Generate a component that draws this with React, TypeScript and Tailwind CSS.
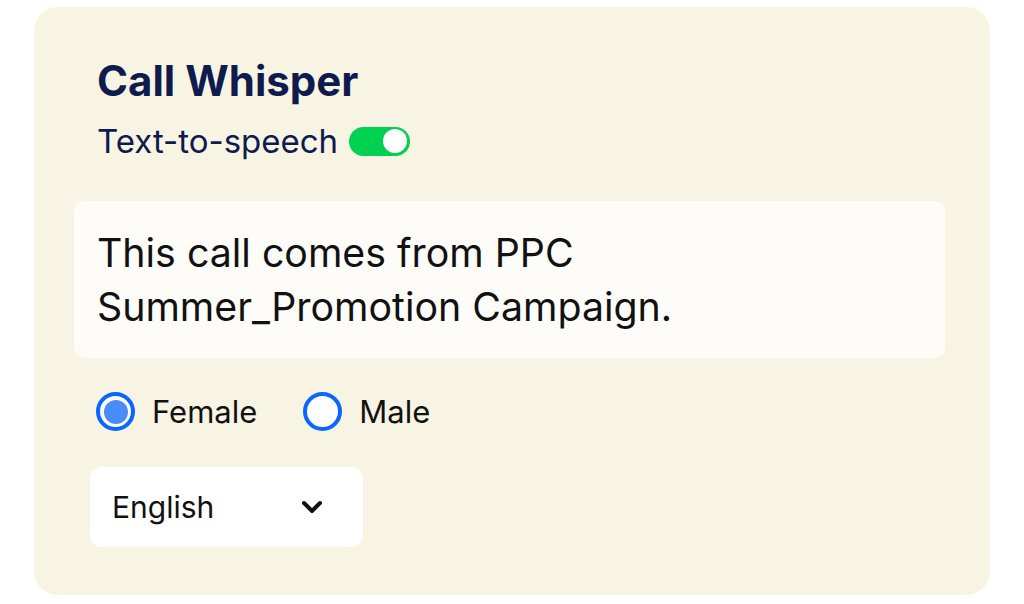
import { useState } from "react";

const Toggle = ({ on }: { on: boolean }) => (
  <span
    className={`inline-flex items-center w-[61px] h-[29px] rounded-full p-[3px] ${
      on ? "bg-[#00d150] justify-end" : "bg-gray-300 justify-start"
    }`}
  >
    <span className="block w-[24px] h-[24px] rounded-full bg-white" />
  </span>
);

const Radio = ({
  label,
  checked,
  onClick,
}: {
  label: string;
  checked: boolean;
  onClick: () => void;
}) => (
  <button type="button" onClick={onClick} className="flex items-center gap-[17px]">
    <span className="flex items-center justify-center w-[39px] h-[39px] rounded-full border-[4px] border-[#0a66ff] bg-white">
      {checked && <span className="block w-[24px] h-[24px] rounded-full bg-[#4a8cf7]" />}
    </span>
    <span className="text-[31px] leading-[39px] text-[#111]">{label}</span>
  </button>
);

export default function App() {
  const [voice, setVoice] = useState("female");

  return (
    <div className="w-[1024px] h-[604px] bg-white pt-[7px] pl-[34px] font-['Inter',sans-serif]">
      <div className="w-[956px] h-[588px] bg-[#f8f4e3] rounded-[24px] pt-[49px] px-[40px]">
        {/* TITLE */}
        <h1 className="pl-[23px] text-[42px] leading-[50px] font-bold text-[#0f1b4f]">
          Call Whisper
        </h1>

        <div className="pl-[23px] mt-[17px] h-[36px] flex items-center gap-[11px]">
          <span className="text-[33px] leading-[36px] text-[#0f1b4f]">Text-to-speech</span>
          <Toggle on />
        </div>

        {/* MESSAGE */}
        <div className="mt-[42px] w-[871px] bg-[#fdfcf9] rounded-[10px] px-[23px] pt-[25px] pb-[24px] text-[39.3px] leading-[54px] text-[#111]">
          This call comes from PPC
          <br />
          Summer_Promotion Campaign.
        </div>

        {/* VOICE */}
        <div className="mt-[34px] pl-[22px] flex items-center gap-[46px]">
          <Radio label="Female" checked={voice === "female"} onClick={() => setVoice("female")} />
          <Radio label="Male" checked={voice === "male"} onClick={() => setVoice("male")} />
        </div>

        {/* LANGUAGE */}
        <div className="mt-[36px] ml-[16px] w-[273px] h-[80px] bg-white rounded-[12px] pl-[22px] pr-[40px] flex items-center justify-between">
          <span className="text-[30px] text-[#111]">English</span>
          <svg width="22" height="16" viewBox="0 0 22 16" fill="none">
            <path d="M3 4l8 8 8-8" stroke="#111" strokeWidth="4" strokeLinecap="round" strokeLinejoin="round" />
          </svg>
        </div>
      </div>
    </div>
  );
}
